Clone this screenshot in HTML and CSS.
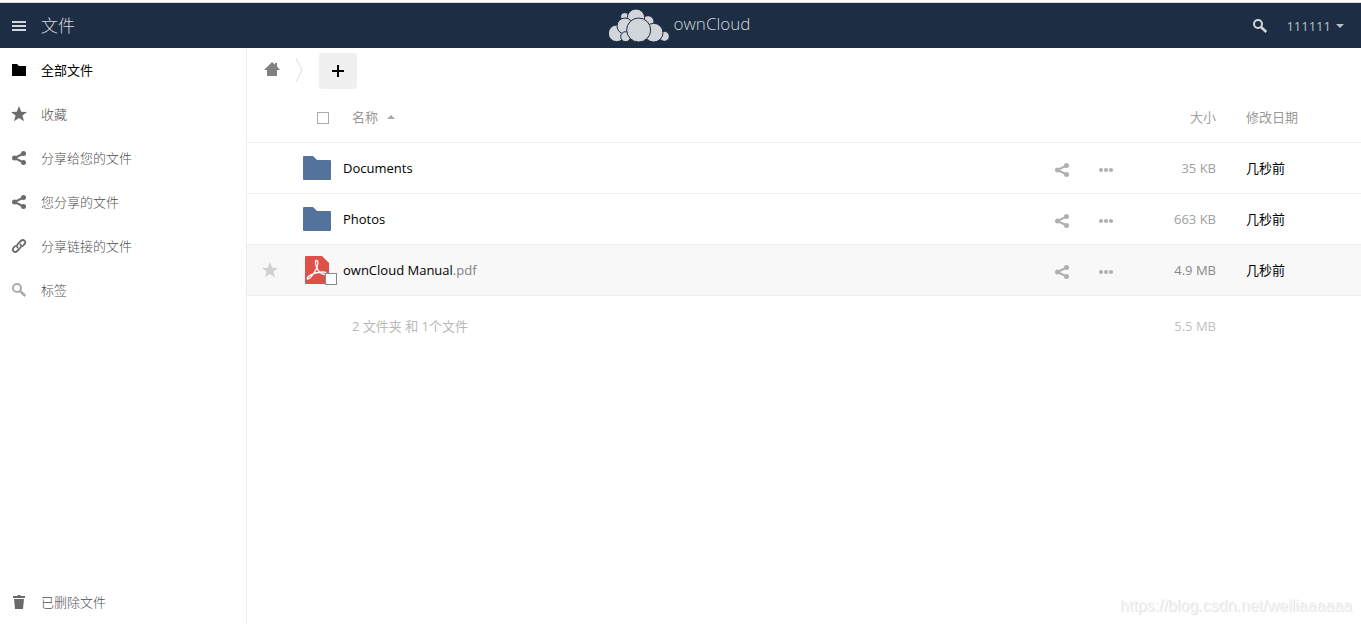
FILE: index.html
```html
<!DOCTYPE html>
<html lang="zh-CN">
<head>
<meta charset="utf-8">
<meta name="viewport" content="width=device-width, initial-scale=1">
<title>文件 - ownCloud</title>
<link rel="stylesheet" href="styles.css">
</head>
<body class="page">
<svg class="symbols" aria-hidden="true">
  <symbol id="share" viewBox="0 0 16 16"><path d="M12.5 3.500 3.500 8l9 4.500" fill="none" stroke="currentColor" stroke-width="2"/><circle cx="12.500" cy="3.500" r="2.500"/><circle cx="3.500" cy="8" r="2.500"/><circle cx="12.500" cy="12.500" r="2.500"/></symbol>
  <symbol id="more" viewBox="0 0 16 16"><circle cx="3" cy="8" r="2.100"/><circle cx="8" cy="8" r="2.100"/><circle cx="13" cy="8" r="2.100"/></symbol>
  <symbol id="star" viewBox="0 0 16 16"><path d="M8 0l2.200 5.700 5.800.2-4.600 3.700L13 15.300 8 12.100 3 15.300l1.600-5.700L0 5.900l5.800-.2z"/></symbol>
  <symbol id="search" viewBox="0 0 16 16"><circle cx="6" cy="6" r="4" fill="none" stroke="currentColor" stroke-width="2"/><path d="M9 9l5.300 5" fill="none" stroke="currentColor" stroke-width="2.500"/></symbol>
  <symbol id="folder" viewBox="0 0 28 24"><path d="M1 0h9l4 4h13q1 0 1 1v18q0 1-1 1H1q-1 0-1-1V1q0-1 1-1z"/></symbol>
</svg>

<header class="topbar">
  <button class="app-menu" type="button">
    <svg class="icon" viewBox="0 0 16 16" aria-hidden="true"><path d="M1 3h14v2H1zM1 7h14v2H1zM1 11h14v2H1z"/></svg>
    <span>文件</span>
  </button>
  <a class="brand" href="#">
    <svg class="brand-cloud" viewBox="57 26 180 99" aria-hidden="true">
      <circle cx="104" cy="49" r="12"/><circle cx="174" cy="64" r="18"/><circle cx="138" cy="52" r="26"/>
      <circle cx="80" cy="99" r="25"/><circle cx="105" cy="77" r="24"/><circle cx="107" cy="109" r="15"/>
      <circle cx="223" cy="108" r="15"/><circle cx="191" cy="97" r="28"/><circle cx="146" cy="89" r="36"/>
    </svg>
    <span class="brand-name">ownCloud</span>
  </a>
  <div class="account">
    <button class="search-button" type="button" aria-label="搜索"><svg class="icon"><use href="#search"/></svg></button>
    <button class="user-menu" type="button">111111<span class="caret-down"></span></button>
  </div>
</header>

<div class="content">
  <nav class="sidebar">
    <a class="nav-item active" href="#"><svg class="icon" viewBox="0 0 16 16"><path d="M1 2h5l2 2h7v10H1z"/></svg>全部文件</a>
    <a class="nav-item" href="#"><svg class="icon"><use href="#star"/></svg><span>收藏</span></a>
    <a class="nav-item" href="#"><svg class="icon"><use href="#share"/></svg><span>分享给您的文件</span></a>
    <a class="nav-item" href="#"><svg class="icon"><use href="#share"/></svg><span>您分享的文件</span></a>
    <a class="nav-item" href="#"><svg class="icon" viewBox="0 0 16 16"><g fill="none" stroke="currentColor" stroke-width="1.800" stroke-linecap="round"><path d="M6.500 9.500C5.500 8 6.200 6.600 7.200 5.600l2.600-2.600c2.600-2.600 5.800.6 3.700 3.200L11.800 8"/><path d="M9.500 6.500c1 1.500.3 2.900-.7 3.900L6.200 13c-2.600 2.600-5.800-.6-3.700-3.200L4.200 8"/></g></svg><span>分享链接的文件</span></a>
    <a class="nav-item tags" href="#"><svg class="icon"><use href="#search"/></svg><span>标签</span></a>
    <a class="nav-item trash" href="#"><svg class="icon" viewBox="0 0 16 16"><path d="M2 2h4l1-1h2l1 1h4v2H2zM3 5h10l-1 10H4z"/></svg><span>已删除文件</span></a>
  </nav>

  <main class="files">
    <div class="controls">
      <a class="home" href="#" aria-label="主页"><svg class="icon" viewBox="0 0 16 16"><path d="M8 0l3 2.700V1h2v3.500L16 8h-3v6H3V8H0z"/></svg></a>
      <svg class="crumb-arrow" viewBox="0 0 8 26" aria-hidden="true"><path d="M1 1l6 12-6 12"/></svg>
      <button class="new-button" type="button" aria-label="新建"><svg class="icon" viewBox="0 0 16 16"><path d="M7 2h2v5h5v2H9v5H7V9H2V7h5z"/></svg></button>
    </div>

    <table class="file-table">
      <colgroup><col class="col-star"><col class="col-icon"><col><col class="col-actions"><col class="col-size"><col class="col-date"></colgroup>
      <thead>
        <tr>
          <th></th>
          <th><input class="checkbox select-all" type="checkbox" aria-label="全选"></th>
          <th class="head-name"><button class="sort" type="button">名称<span class="caret-up"></span></button></th>
          <th></th>
          <th class="size"><button class="sort" type="button">大小</button></th>
          <th class="date"><button class="sort" type="button">修改日期</button></th>
        </tr>
      </thead>
      <tbody>
        <tr>
          <td></td>
          <td><svg class="folder"><use href="#folder"/></svg></td>
          <td><a class="file-name" href="#">Documents</a></td>
          <td><div class="actions"><button type="button" aria-label="分享"><svg class="icon"><use href="#share"/></svg></button><button type="button" aria-label="更多"><svg class="icon"><use href="#more"/></svg></button></div></td>
          <td class="size">35 KB</td>
          <td class="date">几秒前</td>
        </tr>
        <tr>
          <td></td>
          <td><svg class="folder"><use href="#folder"/></svg></td>
          <td><a class="file-name" href="#">Photos</a></td>
          <td><div class="actions"><button type="button" aria-label="分享"><svg class="icon"><use href="#share"/></svg></button><button type="button" aria-label="更多"><svg class="icon"><use href="#more"/></svg></button></div></td>
          <td class="size">663 KB</td>
          <td class="date">几秒前</td>
        </tr>
        <tr class="hovered">
          <td><button class="favorite" type="button" aria-label="收藏"><svg class="icon"><use href="#star"/></svg></button></td>
          <td>
            <div class="thumb">
              <svg class="pdf" viewBox="0 0 24 28" aria-hidden="true"><path class="pdf-page" d="M1 0h16l7 7v20q0 1-1 1H1q-1 0-1-1V1q0-1 1-1z"/><path class="pdf-mark" d="M11.500 4.500c-1.500 0-1.300 3.500.2 7C13 15 16.500 18.500 19.500 18.500c3 0 2-2.500-1-2.500-4.500 0-10 1.500-13.300 3.400-3 1.700-3.500 3.600-2.300 3.600C5.500 23 12.500 13 12.800 7.500c.1-2-.3-3-1.300-3z"/></svg>
              <input class="checkbox thumb-check" type="checkbox" aria-label="选择 ownCloud Manual.pdf">
            </div>
          </td>
          <td><a class="file-name" href="#">ownCloud Manual<span class="extension">.pdf</span></a></td>
          <td><div class="actions"><button type="button" aria-label="分享"><svg class="icon"><use href="#share"/></svg></button><button type="button" aria-label="更多"><svg class="icon"><use href="#more"/></svg></button></div></td>
          <td class="size size-large">4.9 MB</td>
          <td class="date">几秒前</td>
        </tr>
      </tbody>
      <tfoot>
        <tr>
          <td></td><td></td>
          <td class="summary">2 文件夹 和 1个文件</td>
          <td></td>
          <td class="size">5.5 MB</td>
          <td></td>
        </tr>
      </tfoot>
    </table>
  </main>
</div>
<div class="watermark">https://blog.csdn.net/weiliaaaaaa</div>
</body>
</html>
```

FILE: styles.css
```css
*, *::before, *::after {
  box-sizing: border-box;
}

.page {
  margin: 0;
  min-height: 100vh;
  display: flex;
  flex-direction: column;
  border-top: 2px solid #fff;
  background: #fff;
  color: #000;
  font: 13px/20px "Open Sans", "Noto Sans CJK SC", sans-serif;
}

a {
  color: inherit;
  text-decoration: none;
}

button {
  padding: 0;
  border: 0;
  background: none;
  color: inherit;
  font: inherit;
  cursor: pointer;
}

svg {
  display: block;
  fill: currentColor;
}

.symbols {
  position: absolute;
  width: 0;
  height: 0;
}

.icon {
  width: 16px;
  height: 16px;
  flex: none;
}

.topbar {
  display: grid;
  grid-template-columns: 1fr auto 1fr;
  align-items: center;
  height: 46px;
  border-top: 1px solid #d8dade;
  background: #1d2d44;
  color: #d2d5da;
}

.app-menu {
  justify-self: start;
  display: flex;
  align-items: center;
  gap: 14px;
  padding-left: 11px;
  font-size: 17px;
  font-weight: 300;
}

.brand {
  display: flex;
  align-items: center;
  gap: 5px;
  padding: 0 2px 1px 0;
}

.brand-cloud {
  width: 60px;
  height: 33px;
  stroke: #1d2d44;
  stroke-width: 3;
}

.brand-name {
  padding-bottom: 3px;
  font-size: 17px;
  font-weight: 300;
}

.account {
  justify-self: end;
  display: flex;
  align-items: center;
  gap: 18px;
  padding-right: 17px;
}

.user-menu {
  display: flex;
  align-items: center;
  gap: 5px;
  color: #bcc0c7;
}

.caret-down {
  border: 4px solid transparent;
  border-top-color: currentColor;
  border-bottom: 0;
}

.caret-up {
  border: 4px solid transparent;
  border-bottom-color: #aaa;
  border-top: 0;
}

.content {
  flex: 1;
  display: flex;
}

.sidebar {
  flex: none;
  display: flex;
  flex-direction: column;
  width: 247px;
  border-right: 1px solid #eee;
}

.nav-item {
  display: flex;
  align-items: center;
  gap: 14px;
  height: 44px;
  padding-left: 11px;
  color: #6b6b6b;
}

.nav-item span {
  color: #505050;
  font-weight: 300;
}

.nav-item.active {
  color: #000;
}

.nav-item.tags .icon {
  color: #aaa;
}

.nav-item.trash {
  margin-top: auto;
}

.files {
  flex: 1;
  min-width: 0;
}

.controls {
  display: flex;
  align-items: center;
  height: 44px;
  padding-left: 17px;
}

.home {
  color: #808080;
}

.crumb-arrow {
  width: 8px;
  height: 26px;
  margin: 0 16px 0 15px;
  fill: none;
  stroke: #ddd;
}

.new-button {
  display: grid;
  place-items: center;
  width: 38px;
  height: 36px;
  margin-top: 2px;
  border-radius: 3px;
  background: #f0f0f0;
}

.file-table {
  width: 100%;
  table-layout: fixed;
  border-collapse: separate;
  border-spacing: 0;
}

.col-star { width: 46px; }
.col-icon { width: 50px; }
.col-actions { width: 88px; }
.col-size { width: 103px; }
.col-date { width: 130px; }

th,
td {
  height: 51px;
  padding: 0;
  border-bottom: 1px solid #eee;
  text-align: left;
  font-weight: 400;
}

th {
  color: #999;
}

.checkbox {
  appearance: none;
  display: block;
  width: 12px;
  height: 12px;
  margin: 0;
  border: 1px solid #aaa;
  background: #fff;
}

.select-all {
  margin: 2px 0 0 24px;
}

.head-name,
.summary {
  padding-left: 9px;
}

.sort {
  display: flex;
  align-items: center;
  gap: 9px;
}

.size {
  padding-right: 15px;
  color: #a0a0a0;
  text-align: right;
}

.size .sort {
  margin-left: auto;
}

.size-large {
  color: #888;
}

.date {
  padding-left: 15px;
}

.folder {
  width: 28px;
  height: 24px;
  margin-left: 10px;
  color: #54739c;
}

.actions {
  display: flex;
  padding-top: 3px;
  color: #b0b0b0;
}

.actions button {
  display: grid;
  place-items: center;
  width: 44px;
  height: 32px;
}

.hovered {
  background: #f8f8f8;
}

.favorite {
  display: block;
  margin: 0 auto;
  color: #d0d0d0;
}

.thumb {
  position: relative;
  width: 32px;
  margin-left: 12px;
}

.pdf {
  width: 24px;
  height: 28px;
}

.pdf-page {
  fill: #df5148;
}

.pdf-mark {
  fill: none;
  stroke: #fff;
  stroke-width: 1.3;
}

.thumb-check {
  position: absolute;
  right: 0;
  bottom: -1px;
  border-color: #888;
}

.extension {
  color: #808080;
}

tfoot td {
  height: 60px;
  border-bottom: 0;
  color: #b8b8b8;
}

tfoot .size {
  color: #c0c0c0;
}

.watermark {
  position: fixed;
  right: 9px;
  bottom: 8px;
  color: #f4f4f4;
  font: 16px/20px "Liberation Sans", sans-serif;
  text-shadow: 1px 1px 1px #e0e0e0;
}
```
